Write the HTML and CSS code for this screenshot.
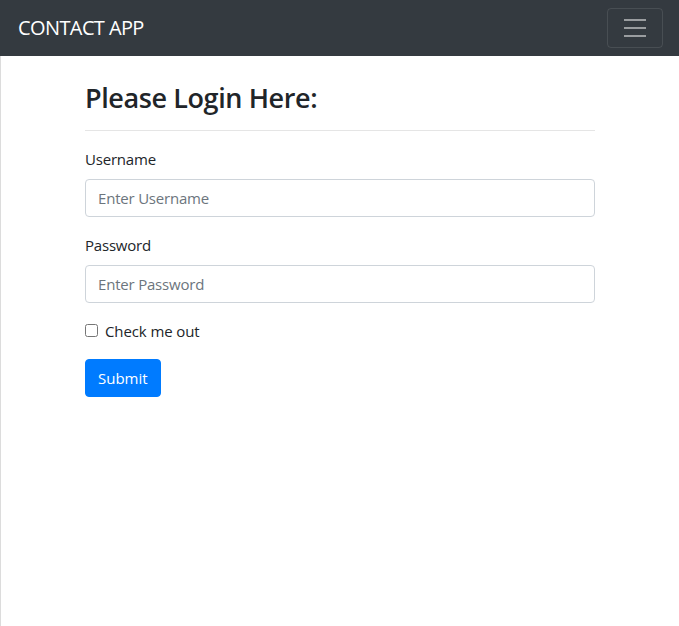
FILE: index.html
```html
<!DOCTYPE html>
<html lang="en">
<head>
<meta charset="utf-8">
<title>Contact App</title>
<link rel="stylesheet" href="styles.css">
</head>
<body>
<nav class="navbar">
  <a class="brand" href="#">CONTACT APP</a>
  <button class="toggler" type="button" aria-label="Toggle navigation">
    <svg class="toggler-icon" width="30" height="30" viewBox="0 0 30 30">
      <path d="M4 7h22M4 15h22M4 23h22" stroke="rgba(255,255,255,0.5)" stroke-width="2" stroke-linecap="butt"/>
    </svg>
  </button>
</nav>
<main class="page">
  <div class="container">
    <h2 class="title">Please Login Here:</h2>
    <hr class="divider">
    <form class="form">
      <div class="form-group">
        <label class="label" for="username">Username</label>
        <input class="input" id="username" type="text" placeholder="Enter Username">
      </div>
      <div class="form-group">
        <label class="label" for="password">Password</label>
        <input class="input" id="password" type="password" placeholder="Enter Password">
      </div>
      <div class="form-check">
        <input class="check-input" id="check" type="checkbox">
        <label class="check-label" for="check">Check me out</label>
      </div>
      <button class="btn" type="submit">Submit</button>
    </form>
  </div>
</main>
</body>
</html>
```
FILE: styles.css
```css
* { box-sizing: border-box; }
html, body { margin: 0; padding: 0; height: 100%; }
body {
  font-family: "Open Sans", "Noto Sans", sans-serif;
  font-size: 16px;
  line-height: 1.5;
  color: #212529;
  background: #fff;
  display: flex;
  flex-direction: column;
}
.navbar {
  height: 56px;
  flex: none;
  background: #343a40;
  display: flex;
  align-items: center;
  justify-content: space-between;
  padding: 8px 16px;
}
.brand {
  color: #fff;
  text-decoration: none;
  font-size: 20px;
  line-height: 30px;
  padding-left: 2px;
  letter-spacing: -0.6px;
}
.toggler {
  width: 56px;
  height: 40px;
  padding: 4px 12px;
  background: transparent;
  border: 1px solid rgba(255,255,255,0.1);
  border-radius: 4px;
  display: flex;
  align-items: center;
  justify-content: center;
}
.toggler-icon { display: block; }
.page {
  flex: 1;
  border-left: 1px solid #dcdcdc;
}
.container {
  width: 540px;
  margin: 0 auto;
  padding: 0 15px;
}
.title {
  margin: 26px 0 0;
  font-size: 27px;
  font-weight: 600;
  line-height: 32px;
  letter-spacing: -0.4px;
}
.divider {
  margin: 16px 0;
  border: 0;
  border-top: 1px solid rgba(0,0,0,0.1);
  height: 0;
}
.form-group { margin-bottom: 16px; }
.label {
  display: inline-block;
  margin-bottom: 8px;
  font-size: 15px;
  line-height: 24px;
  letter-spacing: -0.2px;
}
.input {
  display: block;
  width: 100%;
  height: 38px;
  padding: 6px 12px;
  font-family: inherit;
  font-size: 15px;
  color: #495057;
  border: 1px solid #ced4da;
  border-radius: 4px;
  background: #fff;
  letter-spacing: -0.2px;
}
.input::placeholder { color: #6c757d; opacity: 1; }
.form-check {
  position: relative;
  padding-left: 20px;
  margin-bottom: 16px;
  height: 24px;
}
.check-input {
  position: absolute;
  left: 0;
  top: 5px;
  margin: 0;
  width: 13px;
  height: 13px;
}
.check-label { font-size: 15px; line-height: 24px; letter-spacing: -0.1px; }
.btn {
  display: block;
  height: 38px;
  padding: 6px 12px;
  font-family: inherit;
  font-size: 15px;
  line-height: 24px;
  color: #fff;
  background: #007bff;
  border: 1px solid #007bff;
  border-radius: 4px;
}
```
